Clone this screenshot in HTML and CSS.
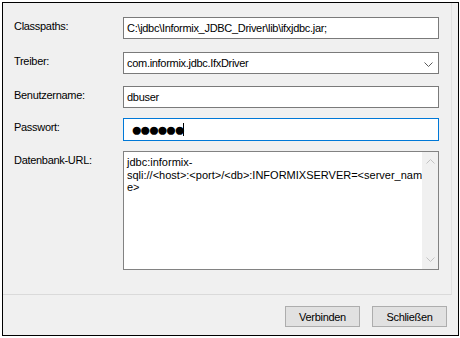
FILE: index.html
```html
<!DOCTYPE html>
<html>
<head>
<meta charset="utf-8">
<link rel="stylesheet" href="styles.css">
</head>
<body>
<div class="dialog">
  <div class="main">
    <div class="row r1">
      <span class="label">Classpaths:</span>
      <div class="field input">C:\jdbc\Informix_JDBC_Driver\lib\ifxjdbc.jar;</div>
    </div>
    <div class="row r2">
      <span class="label">Treiber:</span>
      <div class="field combo">
        <span>com.informix.jdbc.IfxDriver</span>
        <svg class="chev" width="9" height="5" viewBox="0 0 9 5"><path d="M0.5 0.5 L4.5 4.5 L8.5 0.5" fill="none" stroke="#5a5a5a" stroke-width="1"/></svg>
      </div>
    </div>
    <div class="row r3">
      <span class="label">Benutzername:</span>
      <div class="field input">dbuser</div>
    </div>
    <div class="row r4">
      <span class="label">Passwort:</span>
      <div class="field input focus"><span class="dots">●●●●●●</span><span class="caret"></span></div>
    </div>
    <div class="row r5">
      <span class="label">Datenbank-URL:</span>
      <div class="field area">
        <div class="areatext">jdbc:informix-<br>sqli://&lt;host&gt;:&lt;port&gt;/&lt;db&gt;:INFORMIXSERVER=&lt;server_nam<br>e&gt;</div>
        <div class="scroll">
          <svg width="9" height="5" viewBox="0 0 9 5"><path d="M0.5 4.5 L4.5 0.5 L8.5 4.5" fill="none" stroke="#c2c2c2" stroke-width="1"/></svg>
          <svg width="9" height="5" viewBox="0 0 9 5"><path d="M0.5 0.5 L4.5 4.5 L8.5 0.5" fill="none" stroke="#c2c2c2" stroke-width="1"/></svg>
        </div>
      </div>
    </div>
  </div>
  <div class="footer">
    <button class="btn">Verbinden</button>
    <button class="btn">Schließen</button>
  </div>
</div>
</body>
</html>
```
FILE: styles.css
```css
html, body {
  margin: 0;
  padding: 0;
  background: #ffffff;
}
body {
  font-family: "Liberation Sans", Arial, sans-serif;
  font-size: 11px;
  letter-spacing: -0.3px;
  color: #000;
}
.dialog {
  margin: 2px 0 0 2px;
  width: 455px;
  height: 332px;
  border: 1px solid #000;
  background: #f0f0f0;
  display: flex;
  flex-direction: column;
}
.main {
  border-right: 1px solid #e2e2e2;
  border-bottom: 1px solid #dadada;
  padding: 14px 0 0 11px;
  box-sizing: border-box;
  width: 449px;
  height: 292px;
  display: flex;
  flex-direction: column;
}
.row {
  display: flex;
  align-items: flex-start;
}
.r1 { height: 35px; }
.r2 { height: 34px; }
.r3 { height: 32px; }
.r4 { height: 33px; }
.label {
  width: 109px;
  flex: none;
  padding-top: 3px;
  line-height: 13px;
}
.field {
  width: 316px;
  height: 22px;
  box-sizing: border-box;
  border: 1px solid #7a7a7a;
  background: #fff;
  line-height: 13px;
  padding: 4px 0 0 3px;
  white-space: nowrap;
  overflow: hidden;
}
.combo {
  display: flex;
  justify-content: space-between;
  align-items: flex-start;
  padding-right: 5px;
}
.chev {
  margin-top: 5px;
}
.focus {
  border-color: #0078d7;
  height: 23px;
  display: flex;
  align-items: center;
  padding: 0 0 0 7px;
}
.dots {
  font-size: 19px;
  letter-spacing: -2.9px;
  line-height: 16px;
  color: #000;
}
.caret {
  width: 1px;
  height: 13px;
  background: #000;
  margin-left: 1px;
}
.area {
  height: 119px;
  display: flex;
  padding: 0;
  border-color: #828282;
  white-space: normal;
}
.areatext {
  flex: 1;
  padding: 4px 0 0 3px;
  line-height: 12.5px;
  letter-spacing: 0;
  white-space: nowrap;
}
.scroll {
  width: 17px;
  flex: none;
  background: #f0f0f0;
  display: flex;
  flex-direction: column;
  justify-content: space-between;
  align-items: center;
  padding: 7px 0 7px 0;
  box-sizing: border-box;
}
.footer {
  flex: 1;
  display: flex;
  justify-content: flex-end;
  align-items: flex-start;
  gap: 12px;
  padding: 11px 11px 0 0;
}
.btn {
  width: 75px;
  height: 21px;
  margin: 0;
  padding: 0;
  border: 1px solid #adadad;
  background: #e1e1e1;
  font-family: "Liberation Sans", Arial, sans-serif;
  font-size: 11px;
  letter-spacing: -0.3px;
  color: #000;
}
```
